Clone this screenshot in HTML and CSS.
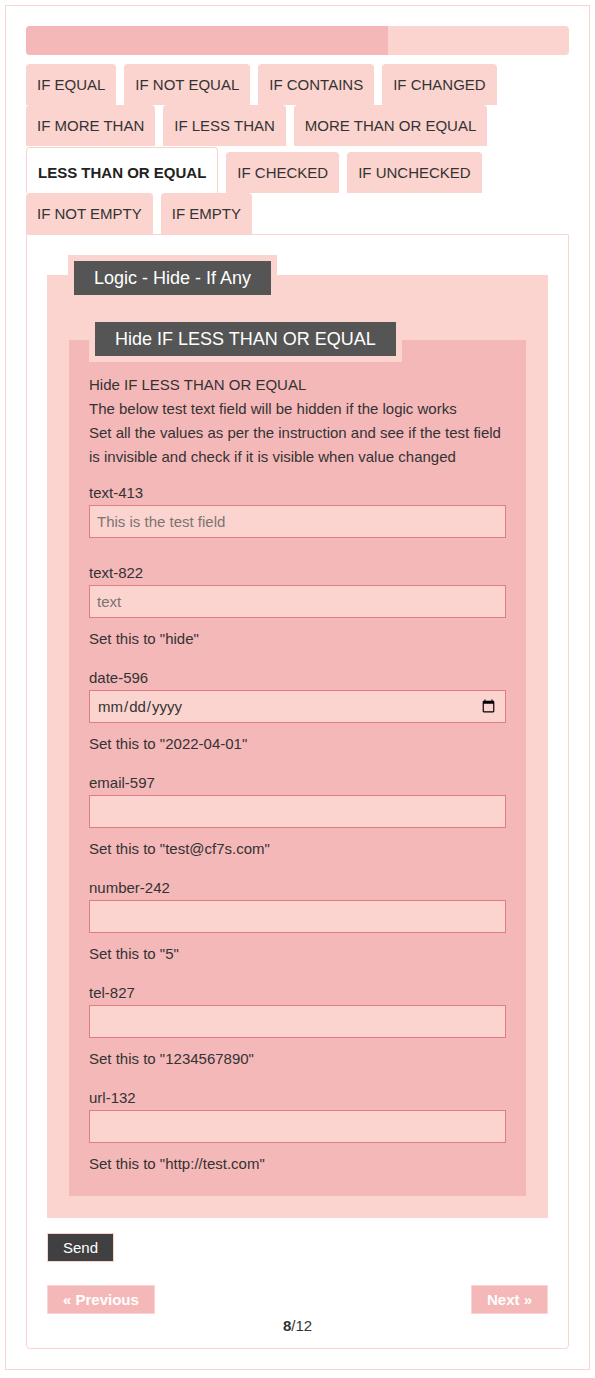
FILE: index.html
```html
<!doctype html>
<html lang="en">
<head>
  <meta charset="utf-8">
  <meta name="viewport" content="width=device-width,initial-scale=1">
  <title>Logic - Hide - If Any</title>
  <link rel="stylesheet" href="styles.css">
</head>
<body>
  <div class="wrap">
    <div class="progress"><div class="progress-bar" style="width:66.67%"></div></div>

    <ul class="tabs">
      <li class="tab">IF EQUAL</li>
      <li class="tab">IF NOT EQUAL</li>
      <li class="tab">IF CONTAINS</li>
      <li class="tab">IF CHANGED</li>
      <li class="tab">IF MORE THAN</li>
      <li class="tab">IF LESS THAN</li>
      <li class="tab">MORE THAN OR EQUAL</li>
      <li class="tab active">LESS THAN OR EQUAL</li>
      <li class="tab">IF CHECKED</li>
      <li class="tab">IF UNCHECKED</li>
      <li class="tab">IF NOT EMPTY</li>
      <li class="tab">IF EMPTY</li>
    </ul>

    <div class="panel">
      <div class="group">
        <div class="legend"><span>Logic - Hide - If Any</span></div>

        <div class="group inner">
          <div class="legend"><span>Hide IF LESS THAN OR EQUAL</span></div>
          <div class="group-body">
            <p class="intro">Hide IF LESS THAN OR EQUAL<br>
              The below test text field will be hidden if the logic works<br>
              Set all the values as per the instruction and see if the test field is invisible and check if it is visible when value changed</p>

            <div class="field first">
              <label for="text-413">text-413</label>
              <input id="text-413" type="text" placeholder="This is the test field">
            </div>
            <div class="field">
              <label for="text-822">text-822</label>
              <input id="text-822" type="text" placeholder="text">
              <div class="note">Set this to "hide"</div>
            </div>
            <div class="field">
              <label for="date-596">date-596</label>
              <input id="date-596" type="date">
              <div class="note">Set this to "2022-04-01"</div>
            </div>
            <div class="field">
              <label for="email-597">email-597</label>
              <input id="email-597" type="email">
              <div class="note">Set this to "test@cf7s.com"</div>
            </div>
            <div class="field">
              <label for="number-242">number-242</label>
              <input id="number-242" type="number">
              <div class="note">Set this to "5"</div>
            </div>
            <div class="field">
              <label for="tel-827">tel-827</label>
              <input id="tel-827" type="tel">
              <div class="note">Set this to "1234567890"</div>
            </div>
            <div class="field">
              <label for="url-132">url-132</label>
              <input id="url-132" type="url">
              <div class="note">Set this to "http://test.com"</div>
            </div>
          </div>
        </div>
      </div>

      <button class="send" type="button">Send</button>

      <div class="pager">
        <button class="page-btn" type="button">&laquo; Previous</button>
        <button class="page-btn" type="button">Next &raquo;</button>
      </div>
      <div class="count"><b>8</b>/12</div>
    </div>
  </div>
</body>
</html>
```

FILE: styles.css
```css
body{margin:5px;font-family:"Liberation Sans",Arial,sans-serif;font-size:15px;color:#333;background:#fff}
.wrap{border:1px solid #fbd3cf;padding:20px}
.progress{height:29px;background:#fbd3cf;border-radius:4px;overflow:hidden;margin-bottom:9px}
.progress-bar{height:100%;background:#f5b8b9}

.tabs{list-style:none;margin:0;padding:0;display:flex;flex-wrap:wrap;align-items:flex-end}
.tab{height:41px;line-height:41px;padding:0 11px;margin-right:8px;background:#fbd3cf;border-radius:4px 4px 0 0;white-space:nowrap}
.tab.active{height:auto;line-height:40px;padding-top:5px;margin-top:1px;background:#fff;border:1px solid #fbd3cf;border-bottom:none;font-weight:bold;color:#222}

.panel{border:1px solid #fbd3cf;border-radius:0 0 4px 4px;padding:20px 20px 10px}

.group{background:linear-gradient(transparent 20px,#fbd3cf 20px);padding:0 22px 22px}
.group .legend{margin-left:-1px;padding-bottom:15px}
.legend span{display:inline-block;background:#555;color:#fff;font-size:18px;line-height:22px;padding:6px 20px;border:6px solid #fbd3cf}
.group.inner{background:linear-gradient(transparent 24px,#f5b8b9 24px);padding:0 20px 20px;margin:0}
.group.inner .legend{margin-left:0;padding-bottom:11px}

.intro{margin:0 0 12px;line-height:24px}
.field{margin-bottom:15px}
.field.first{margin-bottom:23px}
.field:last-child{margin-bottom:0}
.field label{display:block;line-height:24px}
.field input{display:block;box-sizing:border-box;width:100%;height:33px;margin:0;padding:0 7px;border:1px solid #e07c82;background:#fbd3cf;font:15px "Liberation Sans",Arial,sans-serif;color:#333;outline:none}
.field input::placeholder{color:#7d7373}
.note{margin-top:9px;line-height:24px}

.send{display:block;margin-top:15px;height:29px;padding:0 15px;background:#404040;color:#fff;border:1px solid #fbd3cf;font:15px "Liberation Sans",Arial,sans-serif}

.pager{display:flex;justify-content:space-between;margin-top:23px}
.page-btn{height:29px;padding:0 15px;background:#f5b8b9;color:#fff;border:1px solid #fbd3cf;font:bold 15px "Liberation Sans",Arial,sans-serif}
.count{text-align:center;line-height:24px}
```
